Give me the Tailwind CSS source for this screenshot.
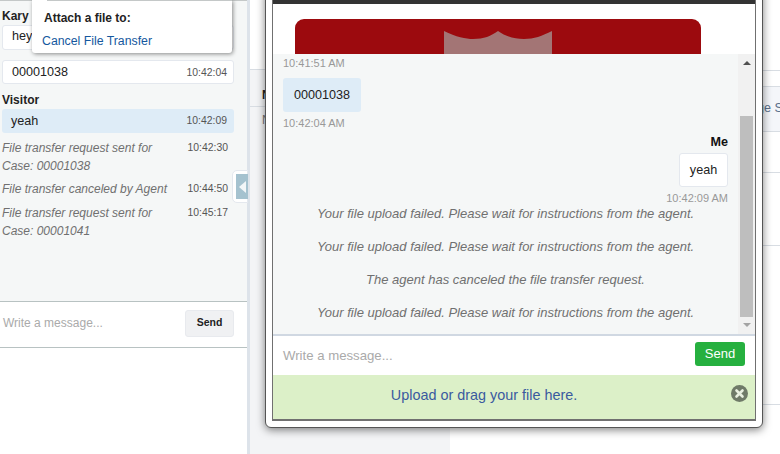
<!DOCTYPE html>
<html lang="en">
<head>
  <meta charset="UTF-8" />
  <title>Agent chat</title>
  <script src="https://cdn.jsdelivr.net/npm/@tailwindcss/browser@4"></script>
</head>
<body class="relative w-[780px] h-[454px] overflow-hidden bg-white font-['Liberation_Sans',Arial,sans-serif] text-[12px] text-[#16325c]">

  <div class="flex h-[454px]">
    <!-- agent console side panel -->
    <div class="w-[250px] shrink-0 border-r-[3px] border-[#dde3ea] flex flex-col">
      <div class="h-[302px] bg-[#f5f7f7] border-t border-t-[#c4c8c8] border-b border-b-[#b8c2c2] pl-[2px] pr-[13px] pt-[8px]">
        <p class="font-bold text-[#222] leading-[14px]">Kary</p>
        <div class="mt-[2px] h-[25px] bg-white border border-[#e4e8ee] rounded-[3px] pl-[9px] leading-[20px] text-[12.6px] text-[#222]">hey</div>
        <div class="mt-[10px] h-[24px] bg-white border border-[#e4e8ee] rounded-[3px] pl-[9px] pr-[6px] pt-[1px] flex justify-between items-center text-[12.6px] text-[#222]">
          <span>00001038</span><span class="text-[10.4px] text-[#555]">10:42:04</span>
        </div>
        <p class="mt-[9px] font-bold text-[#222] leading-[14px]">Visitor</p>
        <div class="mt-[2px] h-[24px] bg-[#deecf7] rounded-[3px] pl-[9px] pr-[7px] flex justify-between items-center text-[12.6px] text-[#222]">
          <span>yeah</span><span class="text-[10.4px] text-[#555]">10:42:09</span>
        </div>
        <div class="mt-[6px] flex justify-between italic text-[#707070] leading-[18px]">
          <span class="w-[170px]">File transfer request sent for Case: 00001038</span><span class="not-italic text-[10.4px] text-[#555] pr-[6px]">10:42:30</span>
        </div>
        <div class="mt-[5px] flex justify-between italic text-[#707070] leading-[18px]">
          <span>File transfer canceled by Agent</span><span class="not-italic text-[10.4px] text-[#555] pr-[6px]">10:44:50</span>
        </div>
        <div class="mt-[6px] flex justify-between italic text-[#707070] leading-[18px]">
          <span class="w-[170px]">File transfer request sent for Case: 00001041</span><span class="not-italic text-[10.4px] text-[#555] pr-[6px]">10:45:17</span>
        </div>
      </div>
      <div class="h-[46px] border-b border-[#b8c2c2] pl-[3px] pr-[13px] pb-[3px] flex justify-between items-center">
        <span class="text-[#aaa]">Write a message...</span>
        <button class="w-[49px] h-[27px] bg-[#f0f1f3] border border-[#e8eaee] rounded-[3px] text-[10.5px] font-bold text-[#222]">Send</button>
      </div>
    </div>
    <!-- page behind the popup -->
    <div class="w-[200px] bg-[#f3f4f6]">
      <div class="h-[70px] bg-white border-b border-[#d8dde3]"></div>
    </div>
  </div>

  <!-- collapse tab -->
  <div class="absolute left-[232px] top-[170px] w-[16px] h-[33px] bg-white border border-[#e4e8ee] rounded-l-[5px] pl-[3px] py-[3px]">
    <div class="w-[12px] h-[25px] bg-[#a5c2cf] flex items-center justify-center">
      <svg width="7" height="12" viewBox="0 0 7 12"><path d="M7 0v12L0 6z" fill="#f2f6f8"/></svg>
    </div>
  </div>

  <!-- attach tooltip -->
  <div class="absolute left-[32px] top-0 w-[200px] h-[53px] bg-white rounded-b-[3px] shadow-[1px_1px_4px_rgba(0,0,0,0.45)] pt-[11px]">
    <div class="absolute top-0 left-[15px] right-0 h-px bg-[#c4c8c8]"></div>
    <p class="pl-[12px] font-bold text-[#222] leading-[15px]">Attach a file to:</p>
    <p class="mt-[8px] pl-[10px] text-[12.3px] text-[#15589e] leading-[15px]">Cancel File Transfer</p>
  </div>

  <!-- bits of the page showing to the sides of the popup -->
  <div class="absolute left-[262px] top-[88px] font-bold text-[#222] leading-[14px]">N</div>
  <div class="absolute left-[250px] top-[106px] w-[16px] h-px bg-[#d8dde3]"></div>
  <div class="absolute left-[262px] top-[113px] text-[#777] leading-[14px]">N</div>
  <div class="absolute left-[763px] top-[70px] w-[17px] h-px bg-[#d8dde3]"></div>
  <div class="absolute left-[757px] top-[86px] w-[23px] h-[46px] bg-[#f4f6fa] border-y border-[#d8dde3] text-[#5a6f8a] text-[12.6px] leading-[42px] overflow-hidden whitespace-nowrap">ge S</div>
  <div class="absolute left-[763px] top-[172px] w-[17px] h-px bg-[#d8dde3]"></div>
  <div class="absolute left-[763px] top-[245px] w-[17px] h-px bg-[#d8dde3]"></div>
  <div class="absolute left-[763px] top-[404px] w-[17px] h-px bg-[#d8dde3]"></div>

  <!-- chat window popup -->
  <div class="absolute left-[265px] top-[-10px] w-[498px] h-[438px] bg-white border border-[#555] rounded-b-[6px] shadow-[0_2px_8px_rgba(0,0,0,0.5)] px-[6px] pb-[6px]">
    <div class="h-full border-x border-b-2 border-[#707070] flex flex-col">
      <div class="h-[13px] shrink-0 bg-[#333]"></div>
      <!-- banner -->
      <div class="h-[50px] shrink-0 bg-white overflow-hidden pt-[15px] pl-[22px]">
        <div class="relative w-[406px] h-[60px] bg-[#9c0a0e] rounded-t-[9px]">
          <svg class="absolute left-[149px] top-[11px]" width="109" height="25" viewBox="0 0 109 25">
            <path d="M0 1C12 7 22 9 29 9C40 9 47 6 54 1C61 6 70 9 80 9C90 9 98 6 108 1V25H0z" fill="#a37575"/>
          </svg>
        </div>
      </div>
      <!-- messages -->
      <div class="h-[282px] shrink-0 bg-[#f5f7f7] border-b-2 border-[#d0d8e2] flex">
        <div class="flex-1 px-[10px] flex flex-col">
          <p class="mt-[3px] text-[11px] leading-[13px] text-[#999]">10:41:51 AM</p>
          <div class="mt-[8px] w-[78px] h-[34px] bg-[#deecf7] rounded-[3px] flex items-center justify-center text-[12.6px] text-[#222]">00001038</div>
          <p class="mt-[5px] text-[11px] leading-[13px] text-[#999]">10:42:04 AM</p>
          <p class="mt-[5px] text-right font-bold text-[12.6px] text-[#111] leading-[14px]">Me</p>
          <div class="mt-[4px] self-end w-[49px] h-[34px] bg-white border border-[#e4e8ee] rounded-[3px] flex items-center justify-center text-[12.6px] text-[#222]">yeah</div>
          <p class="mt-[5px] text-right text-[11px] leading-[13px] text-[#999]">10:42:09 AM</p>
          <p class="mt-[2px] text-center italic text-[13px] text-[#707070] leading-[14px]">Your file upload failed. Please wait for instructions from the agent.</p>
          <p class="mt-[19px] text-center italic text-[13px] text-[#707070] leading-[14px]">Your file upload failed. Please wait for instructions from the agent.</p>
          <p class="mt-[19px] text-center italic text-[13px] text-[#707070] leading-[14px]">The agent has canceled the file transfer request.</p>
          <p class="mt-[19px] text-center italic text-[13px] text-[#707070] leading-[14px]">Your file upload failed. Please wait for instructions from the agent.</p>
        </div>
        <!-- scrollbar -->
        <div class="w-[17px] shrink-0 bg-[#f1f1f1] flex flex-col items-center">
          <svg class="mt-[7px] shrink-0" width="8" height="4" viewBox="0 0 8 4"><path d="M0 4L4 0l4 4z" fill="#505050"/></svg>
          <div class="mt-[51px] w-[13px] h-[201px] bg-[#bebebe]"></div>
          <svg class="mt-[6px] shrink-0" width="8" height="4" viewBox="0 0 8 4"><path d="M0 0h8L4 4z" fill="#a3a3a3"/></svg>
        </div>
      </div>
      <!-- input -->
      <div class="h-[39px] shrink-0 bg-white px-[10px] flex items-center justify-between">
        <span class="text-[13.2px] text-[#aaa]">Write a message...</span>
        <button class="mt-[-3px] w-[50px] h-[24px] bg-[#26b03f] rounded-[3px] text-white text-[13px]">Send</button>
      </div>
      <!-- upload bar -->
      <div class="relative flex-1 bg-[#dcf0c8] flex items-center justify-center text-[14.4px] text-[#3a5a9f]">
        <span class="mr-[60px] mb-[2px]">Upload or drag your file here.</span>
        <svg class="absolute right-[7px] top-[10px]" width="17" height="17" viewBox="0 0 17 17">
          <circle cx="8.5" cy="8.5" r="8.5" fill="#6f7a68"/>
          <path d="M5.5 5.5l6 6M11.5 5.5l-6 6" stroke="#e8efe0" stroke-width="2.6" stroke-linecap="round"/>
        </svg>
      </div>
    </div>
  </div>
</body>
</html>
